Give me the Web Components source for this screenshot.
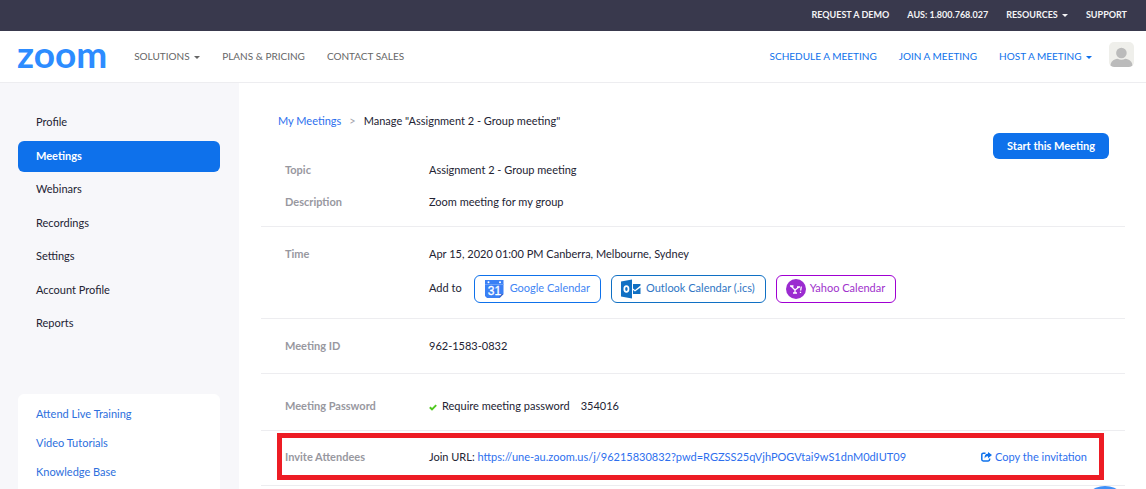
<!DOCTYPE html>
<html lang="en">
<head>
<meta charset="utf-8">
<meta name="viewport" content="width=device-width, initial-scale=1">
<title>Meeting Information - Zoom</title>
<style>
  body { margin: 0; font: 11px/18px Lato, "Open Sans", sans-serif; color: #232333; background: #fff; }
</style>
</head>
<body>
<zm-app></zm-app>
<script>
function define(name, html) {
  const template = document.createElement('template');
  template.innerHTML = html;
  customElements.define(name, class extends HTMLElement {
    constructor() {
      super();
      this.attachShadow({ mode: 'open' }).append(template.content.cloneNode(true));
    }
  });
}

define('zm-caret', `
  <style>
    :host { display: inline-block; vertical-align: middle; margin-left: 2px; border: 3px solid transparent; border-top-color: currentColor; border-bottom: 0; }
  </style>`);

define('zm-topbar', `
  <style>
    :host { display: block; background: #39394d; color: #f4f4f6; }
    nav { display: flex; justify-content: flex-end; gap: 18px; height: 30px; padding: 0 19px 1px; align-items: center; font-size: 9px; font-weight: 700; }
    a { color: inherit; text-decoration: none; white-space: nowrap; }
  </style>
  <nav aria-label="Support">
    <a href="#demo">REQUEST A DEMO</a>
    <a href="#call">AUS: 1.800.768.027</a>
    <a href="#resources">RESOURCES <zm-caret></zm-caret></a>
    <a href="#support">SUPPORT</a>
  </nav>`);

define('zm-avatar', `
  <style>
    :host { display: block; width: 25px; height: 25px; }
    svg { display: block; }
  </style>
  <svg width="25" height="25" viewBox="0 0 25 25" role="img" aria-label="Account">
    <defs><clipPath id="c"><rect width="25" height="25" rx="5"/></clipPath></defs>
    <g clip-path="url(#c)">
      <rect width="25" height="25" fill="#efefeb"/>
      <circle cx="12.4" cy="11" r="5.3" fill="#bbb"/>
      <path d="M1.500 25C1 19.500 5 17 8.500 16.700q4 2 7.800 0C20 17 24 19.500 23.500 25z" fill="#bbb"/>
    </g>
  </svg>`);

define('zm-header', `
  <style>
    :host { display: block; border-bottom: 1px solid #ededf0; }
    header { display: flex; align-items: center; height: 51px; padding: 0 12px 0 17px; font-size: 10px; }
    a { text-decoration: none; white-space: nowrap; }
    .logo { color: #2d8cff; font-size: 37px; line-height: 40px; font-weight: 700; padding-bottom: 6px; }
    nav { display: flex; gap: 22px; padding-bottom: 1px; }
    .site { color: #666; margin-left: 27px; }
    .actions { color: #0e71eb; margin-left: auto; margin-right: 17px; }
    nav a { color: inherit; }
    zm-avatar { margin-bottom: 4px; }
  </style>
  <header>
    <a class="logo" href="#home">zoom</a>
    <nav class="site" aria-label="Site">
      <a href="#solutions">SOLUTIONS <zm-caret></zm-caret></a>
      <a href="#plans">PLANS &amp; PRICING</a>
      <a href="#sales">CONTACT SALES</a>
    </nav>
    <nav class="actions" aria-label="Meetings">
      <a href="#schedule">SCHEDULE A MEETING</a>
      <a href="#join">JOIN A MEETING</a>
      <a href="#host">HOST A MEETING <zm-caret></zm-caret></a>
    </nav>
    <zm-avatar></zm-avatar>
  </header>`);

define('zm-sidebar', `
  <style>
    :host { display: flex; flex-direction: column; box-sizing: border-box; width: 239px; flex: none; background: #f7f7fa; padding: 24px 19px 0 18px; }
    a { text-decoration: none; }
    nav { display: flex; flex-direction: column; justify-content: space-between; height: 232px; }
    nav a { color: #232333; line-height: 29px; padding: 0 18px 2px; border-radius: 6px; }
    nav a[aria-current] { background: #0e71eb; color: #fff; font-weight: 700; }
    .help { flex: 1; display: flex; flex-direction: column; gap: 11px; margin-top: 55px; padding: 11px 18px 0; background: #fff; border-radius: 6px 6px 0 0; }
    .help a { color: #2d6fdd; }
  </style>
  <nav aria-label="Personal">
    <a href="#profile">Profile</a>
    <a href="#meetings" aria-current="page">Meetings</a>
    <a href="#webinars">Webinars</a>
    <a href="#recordings">Recordings</a>
    <a href="#settings">Settings</a>
    <a href="#account">Account Profile</a>
    <a href="#reports">Reports</a>
  </nav>
  <div class="help">
    <a href="#training">Attend Live Training</a>
    <a href="#tutorials">Video Tutorials</a>
    <a href="#knowledge">Knowledge Base</a>
  </div>`);

define('zm-section', `
  <style>
    :host { display: block; position: relative; padding: 0 24px; border-bottom: 1px solid #ededf0; }
  </style>
  <slot></slot>`);

define('zm-field', `
  <style>
    :host { display: grid; grid-template-columns: 144px 1fr; align-items: start; }
    .label { color: #98989f; font-weight: 700; }
  </style>
  <div class="label"><slot name="label"></slot></div>
  <div><slot></slot></div>`);

define('zm-calendar-button', `
  <style>
    :host { display: block; }
    button { display: flex; align-items: center; gap: 4px; box-sizing: border-box; height: 28px; padding: 0 10px 0 9px; font: inherit; color: var(--ink); background: #fff; border: 1px solid var(--line); border-radius: 6px; white-space: nowrap; cursor: pointer; }
    ::slotted(svg) { display: block; flex: none; }
    span { padding-bottom: 2px; }
  </style>
  <button type="button"><slot name="icon"></slot><span><slot></slot></span></button>`);

define('zm-callout', `
  <style>
    :host { position: absolute; inset: 2px 21px 5px 16px; border: 5px solid #ed1c24; pointer-events: none; }
  </style>`);

define('zm-meeting', `
  <style>
    :host { display: block; flex: 1; min-width: 0; padding: 29px 21px 0 22px; }
    a { color: #2d6fee; text-decoration: none; }
    .head { display: flex; justify-content: space-between; padding: 0 16px 0 17px; }
    .crumbs { display: flex; gap: 8px; }
    .sep { color: #a5a5ad; }
    .start { margin-top: 21px; height: 26px; padding: 0 14px 1px; border: 0; border-radius: 6px; background: #0e71eb; color: #fff; font: inherit; font-weight: 700; cursor: pointer; }
    .about { display: grid; gap: 14px; padding-top: 2px; padding-bottom: 15px; }
    .time { padding-top: 18px; padding-bottom: 15px; }
    .add { display: flex; align-items: center; gap: 10px; margin-top: 12px; }
    .add > span { margin-right: 2px; padding-bottom: 2px; }
    .id { padding-top: 18px; padding-bottom: 18px; }
    .password { padding-top: 23px; padding-bottom: 15px; }
    .invite { padding-top: 17px; padding-bottom: 19px; }
    .line { display: flex; align-items: center; }
    .line svg { flex: none; margin-right: 5px; }
    .code { margin-left: 11px; }
    .copy { display: flex; align-items: center; margin-left: auto; margin-right: 14px; white-space: nowrap; }
    .copy svg { margin-right: 3px; }
  </style>
  <div class="head">
    <nav class="crumbs" aria-label="Breadcrumb"><a href="#meetings">My Meetings</a><span class="sep">&gt;</span><span>Manage "Assignment 2 - Group meeting"</span></nav>
    <button class="start" type="button">Start this Meeting</button>
  </div>
  <zm-section class="about">
    <zm-field><span slot="label">Topic</span>Assignment 2 - Group meeting</zm-field>
    <zm-field><span slot="label">Description</span>Zoom meeting for my group</zm-field>
  </zm-section>
  <zm-section class="time">
    <zm-field><span slot="label">Time</span>Apr 15, 2020 01:00 PM Canberra, Melbourne, Sydney
      <div class="add">
        <span>Add to</span>
        <zm-calendar-button style="--ink:#4285f4;--line:#0e71eb">
          <svg slot="icon" width="22" height="20" viewBox="0 0 22 20" aria-hidden="true">
            <path d="M1 1h18.500v14l-4 4H3l-2-2z" fill="#3a80f5"/>
            <path d="M15.500 19v-4h4z" fill="#2a62c8"/>
            <path d="M1 5.500h18.500" stroke="#6ba0f8"/>
            <circle cx="4.500" cy="3.200" r="1" fill="#fff"/><circle cx="16" cy="3.200" r="1" fill="#fff"/>
            <text x="10.500" y="16" text-anchor="middle" font-family="Liberation Sans, sans-serif" font-size="12" fill="#fff" stroke="#fff" stroke-width=".3">31</text>
          </svg>Google Calendar</zm-calendar-button>
        <zm-calendar-button style="--ink:#2f76c4;--line:#1070c4">
          <svg slot="icon" width="21" height="20" viewBox="0 0 21 20" aria-hidden="true">
            <path d="M0 2.500L11 .5v19L0 17.500z" fill="#1070c4"/>
            <ellipse cx="5.400" cy="10" rx="2.100" ry="2.900" fill="none" stroke="#fff" stroke-width="1.700"/>
            <path d="M12 5h7.500v1.500L14 11l-2-1.500zM12 11l2 1.500 5.500-4V15H12z" fill="#1070c4"/>
          </svg>Outlook Calendar (.ics)</zm-calendar-button>
        <zm-calendar-button style="--ink:#a032cc;--line:#a000d2">
          <svg slot="icon" width="20" height="20" viewBox="0 0 20 20" aria-hidden="true">
            <circle cx="10" cy="10" r="10" fill="#9b2bd0"/>
            <path d="M5 7l4 4v3M13 8L9 11M4 7h3.500M11 8h3M7 14h4M15.300 7.500l-.6 4M14.500 12.800v1.300" fill="none" stroke="#fff" stroke-width="1.300"/>
          </svg>Yahoo Calendar</zm-calendar-button>
      </div>
    </zm-field>
  </zm-section>
  <zm-section class="id"><zm-field><span slot="label">Meeting ID</span>962-1583-0832</zm-field></zm-section>
  <zm-section class="password">
    <zm-field><span slot="label">Meeting Password</span>
      <div class="line">
        <svg width="8" height="10" viewBox="0 0 8 10" aria-hidden="true"><path d="M.8 6.200L3 8.300 7.200 4.100" fill="none" stroke="#4fc81e" stroke-width="1.900"/></svg>
        <span>Require meeting password</span><span class="code">354016</span>
      </div>
    </zm-field>
  </zm-section>
  <zm-section class="invite">
    <zm-field><span slot="label">Invite Attendees</span>
      <div class="line">
        <span>Join URL: <a href="#join-url">https://une-au.zoom.us/j/96215830832?pwd=RGZSS25qVjhPOGVtai9wS1dnM0dIUT09</a></span>
        <a class="copy" href="#copy">
          <svg width="11" height="10" viewBox="0 0 11 10" aria-hidden="true"><path d="M4.500 1.200H2.200Q.8 1.200.8 2.600v5Q.8 9 2.200 9h5Q8.600 9 8.600 7.600V6.500" fill="none" stroke="#0e71eb" stroke-width="1.500"/><path d="M7 0l4 3-4 3.200V4.300Q4.600 4 3.700 6.500 3 2 7 1.800z" fill="#0e71eb"/></svg>
          Copy the invitation</a>
      </div>
    </zm-field>
    <zm-callout></zm-callout>
  </zm-section>`);

define('zm-chat', `
  <style>
    :host { position: fixed; right: 17px; bottom: -45px; }
    button { display: block; width: 48px; height: 48px; padding: 0; border: 0; border-radius: 50%; background: #3f8ff7; }
  </style>
  <button type="button" aria-label="Chat"></button>`);

define('zm-app', `
  <style>
    :host { display: flex; flex-direction: column; min-height: 100vh; }
    .page { display: flex; flex: 1; }
    main { display: flex; flex: 1; min-width: 0; }
  </style>
  <zm-topbar></zm-topbar>
  <zm-header></zm-header>
  <div class="page">
    <zm-sidebar></zm-sidebar>
    <main><zm-meeting></zm-meeting></main>
  </div>
  <zm-chat></zm-chat>`);
</script>
</body>
</html>
